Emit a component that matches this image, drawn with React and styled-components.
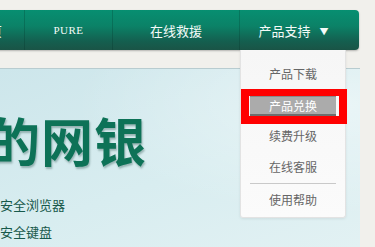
import React from 'react';
import styled, { createGlobalStyle } from 'styled-components';

const GlobalStyle = createGlobalStyle`
  html, body {
    margin: 0;
    padding: 0;
    background: #f1f0ec;
    overflow: hidden;
  }
  body {
    font-family: "Noto Sans CJK SC", "Noto Sans", sans-serif;
  }
`;

const Page = styled.div`
  width: 375px;
  height: 247px;
  padding-top: 10px;
  box-sizing: border-box;
`;

const NavBar = styled.nav`
  display: flex;
  height: 40px;
  width: 423px;
  margin-left: -64px;
  border-radius: 0 4px 4px 0;
  background: linear-gradient(to bottom, #078f71 0%, #0b8267 40%, #145f4f 78%, #1a5446 100%);
  box-shadow: 0 1px 2px rgba(0, 0, 0, 0.25);
  position: relative;
  z-index: 2;
`;

const NavItem = styled.div`
  position: relative;
  width: ${p => p.$w}px;
  display: flex;
  align-items: center;
  justify-content: ${p => (p.$end ? 'flex-end' : 'center')};
  padding-right: ${p => p.$pr || 0}px;
  box-sizing: border-box;
  color: #f4fbf8;
  font-size: 13px;
  border-left: ${p => (p.$first ? 'none' : '1px solid rgba(0, 40, 30, 0.22)')};
`;

const PureLabel = styled.span`
  font-family: "Liberation Serif", "DejaVu Serif", serif;
  font-size: 11px;
  letter-spacing: 0.5px;
`;

const Arrow = styled.span`
  font-size: 9px;
  margin-left: 9px;
  margin-top: 2px;
`;

const Dropdown = styled.div`
  position: absolute;
  top: 40px;
  left: 0;
  width: 106px;
  height: 168px;
  box-sizing: border-box;
  padding-top: 8px;
  background: linear-gradient(to bottom, #f6f6f6, #fbfbfb);
  border: 1px solid #e3e3e3;
  border-top: none;
  border-radius: 0 0 3px 3px;
  box-shadow: 0 1px 3px rgba(0, 0, 0, 0.08);
  display: flex;
  flex-direction: column;
`;

const MenuRow = styled.div`
  height: 31px;
  display: flex;
  align-items: center;
  justify-content: center;
`;

const MenuLabel = styled.div`
  position: relative;
  width: 86px;
  height: 22px;
  box-sizing: border-box;
  display: flex;
  align-items: center;
  justify-content: center;
  font-size: 12px;
  color: ${p => (p.$active ? '#ffffff' : '#666666')};
  background: ${p => (p.$active ? '#ababab' : 'transparent')};
  border-top: ${p => (p.$active ? '3px solid #8a8a8a' : 'none')};
  border-bottom: ${p => (p.$active ? '2px solid #6e6e6e' : 'none')};

  &::after {
    content: '';
    display: ${p => (p.$active ? 'block' : 'none')};
    position: absolute;
    top: -8px;
    left: -9px;
    right: -11px;
    bottom: -10px;
    border: 7px solid #ff0000;
    border-left-width: 8px;
    border-right-width: 8px;
    border-bottom-width: 8px;
  }
`;

const MenuDivider = styled.div`
  width: 86px;
  height: 1px;
  margin: 1px auto 0;
  background: #c9c9c9;
`;

const Panel = styled.section`
  margin-top: 18px;
  width: 360px;
  height: 178px;
  border-top: 1px solid #b8ccd0;
  background:
    radial-gradient(ellipse at 95% 20%, rgba(255, 255, 255, 0.45), rgba(255, 255, 255, 0) 55%),
    linear-gradient(160deg, #cde6eb 0%, #d8edf0 55%, #e2f1f3 100%);
  overflow: hidden;
  position: relative;
  z-index: 1;
`;

const Headline = styled.h1`
  margin: 43px 0 0 -12px;
  font-size: 52px;
  line-height: 56px;
  font-weight: 700;
  letter-spacing: 1px;
  color: #0d7257;
  text-shadow: 1px 2px 2px rgba(0, 50, 40, 0.3);
  white-space: nowrap;
`;

const FeatureList = styled.ul`
  list-style: none;
  margin: 28px 0 0;
  padding: 0;
  display: flex;
  flex-direction: column;
  gap: 9px;
`;

const Feature = styled.li`
  font-size: 13px;
  line-height: 18px;
  color: #17594b;
`;

const menu = ['产品下载', '产品兑换', '续费升级', '在线客服'];

export default function App() {
  return (
    <Page>
      <GlobalStyle />
      <NavBar>
        <NavItem $w={88} $first $end $pr={22}>首页</NavItem>
        <NavItem $w={88}>
          <PureLabel>PURE</PureLabel>
        </NavItem>
        <NavItem $w={127}>在线救援</NavItem>
        <NavItem $w={120} $pr={12}>
          产品支持<Arrow>▼</Arrow>
          <Dropdown>
            {menu.map(m => (
              <MenuRow key={m}>
                <MenuLabel $active={m === '产品兑换'}>{m}</MenuLabel>
              </MenuRow>
            ))}
            <MenuDivider />
            <MenuRow>
              <MenuLabel>使用帮助</MenuLabel>
            </MenuRow>
          </Dropdown>
        </NavItem>
      </NavBar>
      <Panel>
        <Headline>的网银</Headline>
        <FeatureList>
          <Feature>安全浏览器</Feature>
          <Feature>安全键盘</Feature>
        </FeatureList>
      </Panel>
    </Page>
  );
}
